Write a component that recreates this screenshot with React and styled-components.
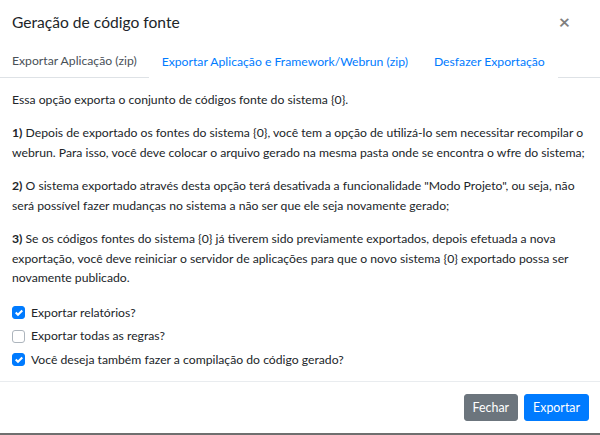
import { useState } from 'react';
import styled, { createGlobalStyle } from 'styled-components';

const GlobalStyle = createGlobalStyle`
  html, body {
    margin: 0;
    padding: 0;
    background: #fff;
  }
  body {
    font-family: Lato, "Noto Sans", sans-serif;
    font-size: 12.2px;
    line-height: 19.5px;
    color: #212529;
  }
  * {
    box-sizing: border-box;
  }
`;

const Modal = styled.div`
  width: 600px;
  height: 435px;
  display: flex;
  flex-direction: column;
  overflow: hidden;
  background: #fff;
  border-bottom: 2px solid #6f6f6f;
`;

const Header = styled.div`
  display: flex;
  align-items: center;
  justify-content: space-between;
  padding: 10px 12px 10px 12px;
`;

const Title = styled.h5`
  margin: 0;
  font-size: 15.6px;
  font-weight: 400;
  line-height: 24px;
  color: #212529;
`;

const Close = styled.button`
  border: 0;
  background: transparent;
  padding: 0 18px 0 0;
  font-size: 19.5px;
  font-weight: 700;
  line-height: 1;
  color: #000;
  opacity: 0.5;
  cursor: pointer;
  font-family: inherit;
`;

const Nav = styled.ul`
  display: flex;
  margin: 1px 0 0;
  padding: 0;
  list-style: none;
  border-bottom: 1px solid #dee2e6;
`;

const NavItem = styled.li`
  flex-shrink: 0;
`;

const NavLink = styled.a`
  display: block;
  margin-bottom: -1px;
  padding: 6px 12px 5px;
  white-space: nowrap;
  border: 1px solid ${p => (p.$active ? '#dee2e6 #dee2e6 #fff' : 'transparent')};
  border-top-left-radius: 4px;
  border-top-right-radius: 4px;
  color: ${p => (p.$active ? '#495057' : '#007bff')};
  background: #fff;
  text-decoration: none;
  cursor: pointer;
`;

const Body = styled.div`
  flex: 1;
  padding: 12px 12px 0;
`;

const Para = styled.p`
  margin: 0 0 14px;
`;

const Options = styled.div`
  display: flex;
  flex-direction: column;
  gap: 3.5px;
  padding-top: 1px;
`;

const Option = styled.label`
  display: flex;
  align-items: center;
  gap: 6px;
  height: 20px;
  cursor: pointer;
`;

const Box = styled.span`
  flex-shrink: 0;
  width: 13px;
  height: 13px;
  border-radius: 3px;
  display: flex;
  align-items: center;
  justify-content: center;
  background: ${p => (p.$checked ? '#007bff' : '#fff')};
  border: 1px solid ${p => (p.$checked ? '#007bff' : '#adb5bd')};
`;

const Footer = styled.div`
  display: flex;
  justify-content: flex-end;
  gap: 6px;
  padding: 12px 11px;
  border-top: 1px solid #e9ecef;
`;

const Button = styled.button`
  font-family: inherit;
  font-size: 12.4px;
  line-height: 19.5px;
  padding: 3px 8px;
  border-radius: 3px;
  border: 1px solid ${p => (p.$primary ? '#007bff' : '#6c757d')};
  background: ${p => (p.$primary ? '#007bff' : '#6c757d')};
  color: #fff;
  cursor: pointer;
`;

function Check({ checked, onToggle, children }) {
  return (
    <Option onClick={onToggle}>
      <Box $checked={checked}>
        {checked && (
          <svg width="8" height="8" viewBox="0 0 8 8">
            <path fill="#fff" d="M6.564.75l-3.59 3.612-1.538-1.55L0 4.26l2.974 2.99L8 2.193z" />
          </svg>
        )}
      </Box>
      {children}
    </Option>
  );
}

export default function App() {
  const [tab, setTab] = useState(0);
  const [opts, setOpts] = useState([true, false, true]);
  const toggle = i => setOpts(o => o.map((v, j) => (j === i ? !v : v)));
  const tabs = [
    'Exportar Aplicação (zip)',
    'Exportar Aplicação e Framework/Webrun (zip)',
    'Desfazer Exportação',
  ];

  return (
    <>
      <GlobalStyle />
      <Modal>
        <Header>
          <Title>Geração de código fonte</Title>
          <Close>×</Close>
        </Header>
        <Nav>
          {tabs.map((t, i) => (
            <NavItem key={t}>
              <NavLink $active={tab === i} onClick={() => setTab(i)}>{t}</NavLink>
            </NavItem>
          ))}
        </Nav>
        <Body>
          <Para>Essa opção exporta o conjunto de códigos fonte do sistema {'{0}'}.</Para>
          <Para>
            <b>1)</b> Depois de exportado os fontes do sistema {'{0}'}, você tem a opção de utilizá-lo sem
            necessitar recompilar o webrun. Para isso, você deve colocar o arquivo gerado na mesma pasta
            onde se encontra o wfre do sistema;
          </Para>
          <Para>
            <b>2)</b> O sistema exportado através desta opção terá desativada a funcionalidade "Modo
            Projeto", ou seja, não será possível fazer mudanças no sistema a não ser que ele seja
            novamente gerado;
          </Para>
          <Para>
            <b>3)</b> Se os códigos fontes do sistema {'{0}'} já tiverem sido previamente exportados, depois
            efetuada a nova exportação, você deve reiniciar o servidor de aplicações para que o novo
            sistema {'{0}'} exportado possa ser novamente publicado.
          </Para>
          <Options>
            <Check checked={opts[0]} onToggle={() => toggle(0)}>Exportar relatórios?</Check>
            <Check checked={opts[1]} onToggle={() => toggle(1)}>Exportar todas as regras?</Check>
            <Check checked={opts[2]} onToggle={() => toggle(2)}>Você deseja também fazer a compilação do código gerado?</Check>
          </Options>
        </Body>
        <Footer>
          <Button>Fechar</Button>
          <Button $primary>Exportar</Button>
        </Footer>
      </Modal>
    </>
  );
}
